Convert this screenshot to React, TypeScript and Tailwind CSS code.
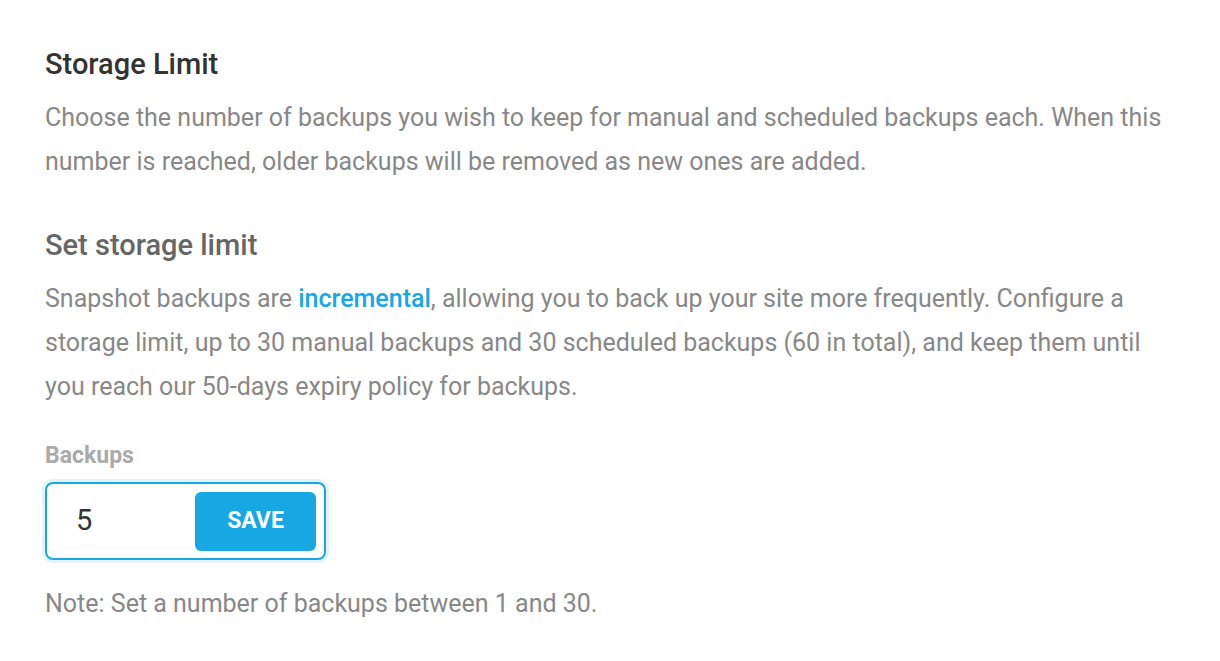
import React from 'react';

const App: React.FC = () => {
  return (
    <div className="min-h-[661px] w-[1220px] bg-white font-['Roboto',sans-serif]">
      <div className="px-[45px] pt-[44px]">
        <h2 className="text-[29px] font-medium leading-[40px] text-[#333333]">Storage Limit</h2>
        <p className="mt-[12px] text-[25px] leading-[44px] text-[#888888]">
          Choose the number of backups you wish to keep for manual and scheduled backups each. When this number is
          reached, older backups will be removed as new ones are added.
        </p>

        <h3 className="mt-[41px] text-[29px] font-medium leading-[40px] text-[#666666]">Set storage limit</h3>
        <p className="mt-[12px] w-[1100px] text-[25px] leading-[44px] text-[#888888]">
          Snapshot backups are <a className="font-medium text-[#17a8e3]">incremental</a>, allowing you to back up your
          site more frequently. Configure a storage limit, up to 30 manual backups and 30 scheduled backups (60 in
          total), and keep them until you reach our 50-days expiry policy for backups.
        </p>

        <label className="mt-[34px] block text-[23px] font-bold leading-[26px] text-[#aaaaaa]">Backups</label>
        <div className="mt-[13px] flex h-[78px] w-[281px] items-center justify-between rounded-[8px] border-[2px] border-[#17a8e3] pl-[29px] pr-[8px] shadow-[0_0_0_3px_#e1f3fb]">
          <span className="text-[29px] text-[#333333]">5</span>
          <button className="flex h-[59px] w-[121px] items-center justify-center rounded-[6px] bg-[#17a8e3] text-[23px] font-bold text-white">
            SAVE
          </button>
        </div>

        <p className="mt-[22px] text-[25px] leading-[44px] text-[#888888]">
          Note: Set a number of backups between 1 and 30.
        </p>
      </div>
    </div>
  );
};

export default App;
